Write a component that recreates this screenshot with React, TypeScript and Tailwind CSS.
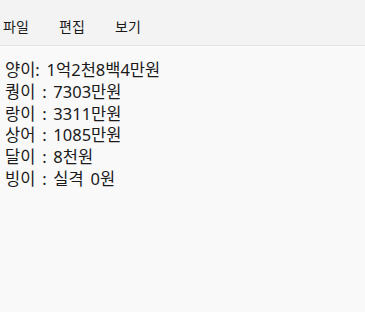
export default function App() {
  const lines = [
    "양이: 1억2천8백4만원",
    "퀑이 : 7303만원",
    "랑이 : 3311만원",
    "상어 : 1085만원",
    "달이 : 8천원",
    "빙이 : 실격 0원",
  ];

  return (
    <div
      className="h-[312px] w-[365px] bg-[#f9f9f9] text-[#1a1a1a]"
      style={{ fontFamily: '"Noto Sans", "Noto Sans CJK KR", sans-serif' }}
    >
      {/* menu bar */}
      <div className="flex h-[46px] items-start border-b border-[#e5e5e5] bg-[#f3f3f3] pl-[3px] pt-[17px] text-[14px] leading-[20px]">
        <span className="w-[56px]">파일</span>
        <span className="w-[56px]">편집</span>
        <span>보기</span>
      </div>

      {/* content */}
      <div className="pl-[5px] pt-[13px] text-[16.5px] leading-[21.8px] [word-spacing:2.5px]">
        {lines.map((line) => (
          <div key={line}>{line}</div>
        ))}
      </div>
    </div>
  );
}
